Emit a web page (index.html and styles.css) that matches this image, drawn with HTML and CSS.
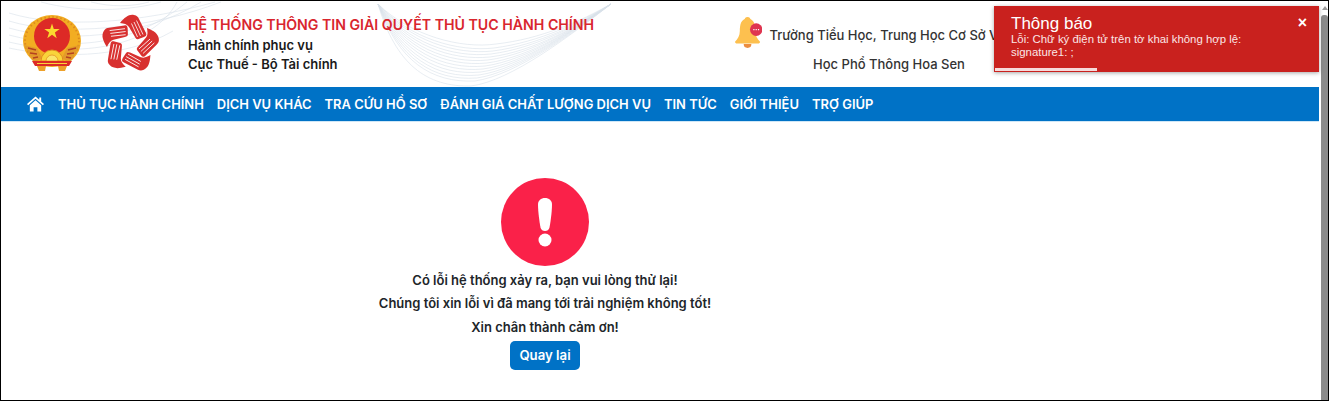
FILE: index.html
```html
<!DOCTYPE html>
<html lang="vi">
<head>
  <meta charset="UTF-8" />
  <meta name="viewport" content="width=device-width, initial-scale=1.0"/>
  <title>Hệ thống thông tin giải quyết thủ tục hành chính</title>
  <link rel="stylesheet" href="styles.css">
</head>
<body>

<div class="window">
  <div class="page">
    <header class="header">
      <svg class="header-bg" viewBox="0 0 640 86" fill="none" stroke="#d8e0ea" stroke-width="0.6">
        <path d="M8 12C60 28 140 22 214 1"/>
        <path d="M8 20C60 36 150 28 220 1"/>
        <path d="M8 27C60 42 140 38 200 1"/>
        <path d="M8 34C70 50 130 46 186 1"/>
        <path d="M8 41C70 56 150 50 176 1"/>
        <path d="M8 47C50 56 120 60 172 30"/>
        <path d="M40 1C80 12 130 10 160 1"/>
        <path d="M90 1C110 6 130 6 148 1"/>
        <path d="M377 3C410 35 460 48 495 43C540 38 580 20 610 3"/>
        <path d="M377 3C409 38 457 51 493 47C539 41 580 21 610 3"/>
        <path d="M377 3C408 40 455 54 492 50C538 44 580 22 610 3"/>
        <path d="M377 3C406 42 452 57 490 53C536 47 579 23 610 3"/>
        <path d="M377 3C405 44 450 60 489 56C535 50 578 24 610 3"/>
        <path d="M377 3C404 46 447 63 487 59C532 53 577 25 610 3"/>
        <path d="M377 3C403 48 445 66 486 62C530 56 576 26 610 3"/>
        <path d="M377 3C402 50 442 69 484 65C527 59 575 27 610 3"/>
        <path d="M377 3C401 52 440 72 482 68C525 62 574 28 610 3"/>
        <path d="M377 3C400 54 437 75 480 71C522 65 573 29 610 3"/>
        <path d="M377 3C399 56 435 78 478 74C520 68 572 30 610 3"/>
        <path d="M377 3C398 58 432 80 476 77C517 71 572 31 610 3"/>
        <path d="M377 3C397 60 430 82 474 80C515 74 572 32 610 3"/>
        <path d="M377 3C395 64 426 86 470 85C510 80 570 34 610 3"/>
      </svg>

      <svg class="emblem" viewBox="0 0 60 58">
        <ellipse cx="30" cy="26" rx="29" ry="26" fill="#f2ad22"/>
        <ellipse cx="30" cy="26" rx="27" ry="24" fill="none" stroke="#de8a1f" stroke-width="2" stroke-dasharray="1.500 2.500"/>
        <circle cx="30" cy="21" r="18" fill="#dd2a26"/>
        <path d="M30 8.500l1.800 5.600h5.900l-4.800 3.500 1.800 5.600-4.700-3.500-4.700 3.500 1.800-5.600-4.800-3.500h5.900z" fill="#fbd92f"/>
        <path d="M2 30l13 3 5 10-8 5zM58 30l-13 3-5 10 8 5z" fill="#e39a2b"/>
        <path d="M6 33l8 2M8 38l7 1M11 43l5-1M54 33l-8 2M52 38l-7 1M49 43l-5-1" stroke="#b5411f" stroke-width="1.500"/>
        <path d="M19 46a11 11 0 0 1 22 0z" fill="#f9d43a" stroke="#e08a20"/>
        <path d="M24 46a6 6 0 0 1 12 0z" fill="#fbe56a" stroke="#e08a20" stroke-width="0.700"/>
        <path d="M10 46h40l-3 5H13z" fill="#dd2a26"/>
        <path d="M15 48.500h30" stroke="#f9d43a" stroke-width="1"/>
        <path d="M15 51h9l-1 5h-6zM36 51h9l-2 5h-6z" fill="#eea12a"/>
      </svg>

      <svg class="logo-star" viewBox="-33 -33 66 66">
        <defs>
          <g id="hand">
            <path d="M-10 -21C-5 -27 -1 -30 4 -29C7 -28.500 8 -27 9 -25L16 -11C17 -9 16 -8 14 -7L8.500 -5C7 -4.500 6 -5 5 -7L-1 -17C-3 -20 -6 -20.500 -10 -21Z" fill="#d8302f"/>
            <path d="M1.500 -20.500L7.500 -7M4 -22L10.500 -8M6.500 -23.500L13 -9.500" stroke="#fff" stroke-width="0.800"/>
          </g>
        </defs>
        <use href="#hand"/>
        <use href="#hand" transform="rotate(72)"/>
        <use href="#hand" transform="rotate(144)"/>
        <use href="#hand" transform="rotate(216)"/>
        <use href="#hand" transform="rotate(288)"/>
      </svg>

      <div class="site-name">
        <div class="site-title">HỆ THỐNG THÔNG TIN GIẢI QUYẾT THỦ TỤC HÀNH CHÍNH</div>
        <div class="site-sub">Hành chính phục vụ</div>
        <div class="site-sub">Cục Thuế - Bộ Tài chính</div>
      </div>

      <div class="user-box">
        <svg class="bell" viewBox="0 0 28 33">
          <circle cx="13" cy="3.500" r="3" fill="#fdbf4c"/>
          <path d="M13 2C6 2 5 9 5 15C5 20 3 23 0 26C0 27 1 28 2 28H24C25 28 26 27 26 26C23 23 21 20 21 15C21 9 20 2 13 2Z" fill="#fdc04f"/>
          <path d="M9 28.500a4 4 0 0 0 8 0z" fill="#ec8d3f"/>
          <circle cx="22" cy="13.500" r="6.500" fill="#df3550"/>
          <path d="M19 13.500h1.200M21.400 13.500h1.200M23.800 13.500h1.200" stroke="#fff" stroke-width="1.200"/>
        </svg>
        <div class="school-name">
          <div>Trường Tiểu Học, Trung Học Cơ Sở Và&nbsp;</div>
          <div>Học Phổ Thông Hoa Sen</div>
        </div>
      </div>
    </header>

    <nav class="nav">
      <svg class="home-icon" viewBox="0 0 18 16" fill="#fff">
        <path d="M9 0L0 8l1.200 1.300L9 2.400l7.800 6.900L18 8l-3-2.700V1.200h-2v2.300z"/>
        <path d="M9 4L3 9.300V16h4v-4.500h4V16h4V9.300z"/>
      </svg>
      <a href="#">THỦ TỤC HÀNH CHÍNH</a>
      <a href="#">DỊCH VỤ KHÁC</a>
      <a href="#">TRA CỨU HỒ SƠ</a>
      <a href="#">ĐÁNH GIÁ CHẤT LƯỢNG DỊCH VỤ</a>
      <a href="#">TIN TỨC</a>
      <a href="#">GIỚI THIỆU</a>
      <a href="#">TRỢ GIÚP</a>
    </nav>

    <main class="main">
      <div class="error-box">
        <svg class="error-icon" viewBox="0 0 88 88">
          <circle cx="44" cy="44" r="44" fill="#fa2149"/>
          <path d="M44 20c4 0 7 2.500 7 6.500 0 7-1.500 18-2.500 23-.5 2.500-2.500 3.500-4.500 3.500s-4-1-4.500-3.500c-1-5-2.500-16-2.500-23C37 22.500 40 20 44 20z" fill="#fff"/>
          <circle cx="44" cy="62" r="6.500" fill="#fff"/>
        </svg>
        <p>Có lỗi hệ thống xảy ra, bạn vui lòng thử lại!</p>
        <p>Chúng tôi xin lỗi vì đã mang tới trải nghiệm không tốt!</p>
        <p>Xin chân thành cảm ơn!</p>
        <button class="btn-back">Quay lại</button>
      </div>
    </main>
  </div>

  <div class="scrollbar">
    <div class="scroll-arrow"></div>
    <div class="scroll-thumb"></div>
  </div>

  <div class="toast">
    <div class="toast-title">Thông báo</div>
    <div class="toast-text">Lỗi: Chữ ký điện tử trên tờ khai không hợp lệ: signature1: ;</div>
    <span class="toast-close">×</span>
    <div class="toast-progress"></div>
  </div>
</div>

</body>
</html>
```
FILE: styles.css
```css
* {
  box-sizing: border-box;
}
html, body {
  margin: 0;
  height: 100%;
  overflow: hidden;
}
body {
  font-family: Inter, 'Noto Sans', sans-serif;
  background-color: #fff;
  color: #212529;
}

.window {
  position: relative;
  display: flex;
  height: 401px;
  border: 1px solid #000;
  overflow: hidden;
}

.page {
  flex: 1;
  min-width: 0;
  margin-right: 2px;
}

/* header */
.header {
  position: relative;
  display: flex;
  align-items: center;
  height: 86px;
  padding-left: 21px;
}

.header-bg {
  position: absolute;
  left: 0;
  top: 0;
  width: 640px;
  height: 86px;
}

.emblem {
  position: relative;
  width: 60px;
  height: 58px;
  margin-top: -1px;
}

.logo-star {
  position: relative;
  width: 66px;
  height: 66px;
  margin-left: 15px;
}

.site-name {
  position: relative;
  margin-left: 25px;
  margin-top: 1px;
  width: 480px;
}

.site-title {
  font-size: 14.150px;
  font-weight: 600;
  line-height: 20px;
  color: #d9262e;
  margin-bottom: 1px;
}

.site-sub {
  font-size: 13px;
  font-weight: 600;
  line-height: 19px;
  color: #1a1a1a;
}

.user-box {
  position: relative;
  display: flex;
  margin-left: 67px;
}

.bell {
  width: 27px;
  height: 33px;
  margin-top: 7px;
  flex-shrink: 0;
}

.school-name {
  width: 240px;
  margin-top: 12px;
  margin-left: 7px;
  font-size: 13px;
  font-weight: 500;
  line-height: 29px;
  text-align: center;
  white-space: nowrap;
  color: #333;
}

/* nav */
.nav {
  display: flex;
  align-items: center;
  gap: 13px;
  height: 35px;
  padding-left: 26px;
  padding-bottom: 1px;
  background-color: #0072c6;
  border-bottom: 1px solid #cfe7f7;
}

.nav a {
  font-size: 12.950px;
  font-weight: 600;
  color: #fff;
  text-decoration: none;
  white-space: nowrap;
}

.home-icon {
  width: 17px;
  height: 16px;
  margin-top: 1px;
  margin-right: 1px;
}

/* error */
.main {
  padding-top: 56px;
}

.error-box {
  width: 1088px;
  text-align: center;
}

.error-icon {
  display: block;
  width: 88px;
  height: 88px;
  margin: 0 auto 2.500px;
}

.error-box p {
  margin: 0;
  font-size: 13px;
  font-weight: 600;
  line-height: 23.500px;
  color: #212529;
}

.btn-back {
  display: block;
  width: 70px;
  height: 29px;
  margin: 1.500px auto 0;
  border: none;
  border-radius: 5px;
  font-family: inherit;
  font-size: 13.200px;
  font-weight: 600;
  color: #fff;
  background-color: #0072c6;
}

/* scrollbar */
.scrollbar {
  position: relative;
  width: 7px;
  flex-shrink: 0;
  background-color: #fff;
}

.scroll-arrow {
  width: 0;
  height: 0;
  margin: 5px auto 0;
  border-left: 3px solid transparent;
  border-right: 3px solid transparent;
  border-bottom: 4px solid #9a9a9a;
}

.scroll-thumb {
  position: absolute;
  top: 14px;
  bottom: 0;
  left: 0;
  right: 0;
  border-radius: 3px 3px 0 0;
  background-color: #8b8b8b;
}

/* toast */
.toast {
  position: absolute;
  top: 5px;
  left: 993px;
  width: 325px;
  height: 66px;
  padding: 9px 60px 0 17px;
  font-family: 'Liberation Sans', Arial, sans-serif;
  color: #fff;
  background-color: #c9211e;
  box-shadow: 0 1px 4px rgba(0, 0, 0, 0.35);
}

.toast-title {
  font-size: 17px;
  line-height: 18px;
}

.toast-text {
  font-size: 11.400px;
  line-height: 13px;
  color: #fbe6e6;
}

.toast-close {
  position: absolute;
  top: 8px;
  right: 12px;
  font-size: 16px;
  font-weight: 700;
  line-height: 18px;
}

.toast-progress {
  position: absolute;
  left: 1px;
  bottom: 1px;
  width: 102px;
  height: 3px;
  background-color: #f6dada;
}
```
